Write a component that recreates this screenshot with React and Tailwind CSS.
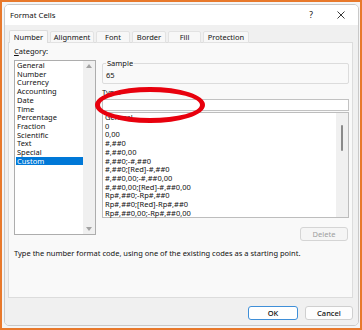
import React from 'react';

const categories = [
  'General', 'Number', 'Currency', 'Accounting', 'Date', 'Time',
  'Percentage', 'Fraction', 'Scientific', 'Text', 'Special', 'Custom',
];

const codes = [
  'General', '0', '0,00', '#,##0', '#,##0,00', '#,##0;-#,##0',
  '#,##0;[Red]-#,##0', '#,##0,00;-#,##0,00', '#,##0,00;[Red]-#,##0,00',
  'Rp#,##0;-Rp#,##0', 'Rp#,##0;[Red]-Rp#,##0', 'Rp#,##0,00;-Rp#,##0,00',
];

const tabs = [
  { name: 'Alignment', w: 'w-[44px]' },
  { name: 'Font', w: 'w-[34px]' },
  { name: 'Border', w: 'w-[34px]' },
  { name: 'Fill', w: 'w-[33px]' },
  { name: 'Protection', w: 'w-[46px]' },
];

const App = () => {
  return (
    <div className="w-[362px] h-[330px] border-2 border-[#e8792c] bg-[#f4f5f6] pt-[2px] pl-[2px] font-['Noto_Sans',sans-serif] text-[#111] text-[7.5px] leading-[8.7px]">
      <div className="w-[355px] h-[322px] flex flex-col border border-[#c9c9c9] rounded-[5px] overflow-hidden">
        {/* title bar */}
        <div className="h-[20px] bg-white flex items-center pl-[5px] pr-[13px] shrink-0">
          <span className="text-[7.8px]">Format Cells</span>
          <span className="ml-auto text-[8.5px] mr-[24px]">?</span>
          <svg width="8" height="8" viewBox="0 0 8 8" className="mb-[1px]">
            <path d="M0.5 0.5 L7.5 7.5 M7.5 0.5 L0.5 7.5" stroke="#222" strokeWidth="0.9" fill="none" />
          </svg>
        </div>

        {/* body */}
        <div className="flex-1 bg-[#f0f0f0] pl-[3px] pr-[5px] pt-[5px] flex flex-col">
          {/* tabs */}
          <div className="flex gap-[2px] h-[13px] relative z-10 -mb-px">
            <div className="ml-[1px] w-[39px] h-[13px] bg-[#f9f9f9] border border-b-0 border-[#dcdcdc] rounded-t-[2px] flex items-center justify-center">
              Number
            </div>
            {tabs.map((t) => (
              <div
                key={t.name}
                className={`${t.w} h-[12px] mt-[1px] bg-[#f7f7f7] border border-[#e2e2e2] rounded-t-[2px] flex items-center justify-center`}
              >
                {t.name}
              </div>
            ))}
          </div>

          {/* panel */}
          <div className="relative h-[256px] border border-[#dcdcdc] bg-[#f9f9f9] pl-[5px] pt-[4px]">
            <div className="flex gap-[6px]">
              {/* category column */}
              <div className="w-[82px] flex flex-col">
                <div className="h-[9px] leading-[9px] mb-[4px]">
                  <span className="underline underline-offset-[1px]">C</span>ategory:
                </div>
                <div className="h-[175px] bg-white border border-[#adadad] flex">
                  <div className="flex-1 pl-[1px]">
                    {categories.map((c) => (
                      <div
                        key={c}
                        className={c === 'Custom' ? 'bg-[#0078d7] text-white pl-[1px]' : 'pl-[1px]'}
                      >
                        {c}
                      </div>
                    ))}
                  </div>
                  <div className="w-[12px] bg-[#f0f0f0] flex flex-col items-center justify-between pt-[3px] pb-[3px]">
                    <svg width="6" height="4" viewBox="0 0 6 4">
                      <path d="M0 4 L3 0 L6 4 Z" fill="#a3a3a3" />
                    </svg>
                    <svg width="6" height="4" viewBox="0 0 6 4">
                      <path d="M0 0 L6 0 L3 4 Z" fill="#a3a3a3" />
                    </svg>
                  </div>
                </div>
              </div>

              {/* right column */}
              <div className="w-[247px] flex flex-col">
                <fieldset className="h-[25px] border border-[#dcdcdc] rounded-[2px] pl-[3px] mt-[12px]">
                  <legend className="px-[1px] leading-[8px]">Sample</legend>
                  <div className="mt-[4px]">65</div>
                </fieldset>
                <div className="mt-[3.5px] h-[9px] leading-[9px]">
                  <span className="underline underline-offset-[1px]">T</span>ype:
                </div>
                <div className="mt-[2.5px] h-[12px] bg-white border border-[#c2c2c2]"></div>
                <div className="mt-[1px] h-[106px] bg-white border border-[#bdbdbd] flex">
                  <div className="flex-1 pl-[2px]">
                    {codes.map((c) => (
                      <div key={c}>{c}</div>
                    ))}
                  </div>
                  <div className="w-[12px] bg-[#f0f0f0] relative">
                    <div className="absolute left-[5px] top-[12px] w-[1.5px] h-[26px] bg-[#8a8a8a] rounded-full"></div>
                  </div>
                </div>
                <div className="flex justify-end mt-[9px] pr-[1px]">
                  <div className="w-[48px] h-[14px] border border-[#d5d5d5] bg-[#f5f5f5] rounded-[3px] text-[#9d9d9d] flex items-center justify-center">
                    Delete
                  </div>
                </div>
              </div>
            </div>

            <div className="mt-[8px]">
              Type the number format code, using one of the existing codes as a starting point.
            </div>

            {/* red annotation ellipse */}
            <div className="absolute left-[86px] top-[44px] w-[110px] h-[36px] rounded-[50%] border-[5px] border-[#e8000d]"></div>
          </div>

          {/* buttons */}
          <div className="flex justify-end gap-[7px] mt-[8px]">
            <div className="w-[50px] h-[14px] bg-white border border-[#3f8fd8] rounded-[3px] flex items-center justify-center font-medium">
              OK
            </div>
            <div className="w-[48px] h-[14px] bg-[#fdfdfd] border border-[#cfcfcf] rounded-[3px] flex items-center justify-center font-medium">
              Cancel
            </div>
          </div>
        </div>
      </div>
    </div>
  );
};

export default App;
